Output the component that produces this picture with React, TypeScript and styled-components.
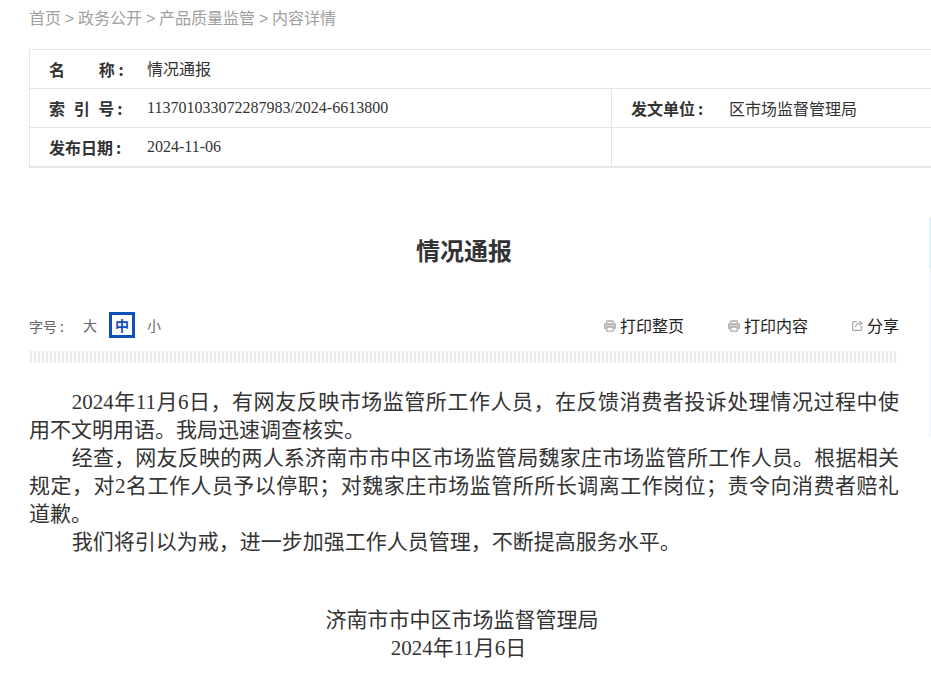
import React from "react";
import styled, { createGlobalStyle } from "styled-components";

const Global = createGlobalStyle`
  html, body { margin: 0; padding: 0; background: #fff; overflow: hidden; }
  body { font-family: "Liberation Serif", "Noto Sans CJK SC", serif; width: 931px; height: 695px; position: relative; }
`;
const CJK = `"Noto Sans CJK SC", "Liberation Sans", sans-serif`;
const Page = styled.div`
  width: 931px; height: 695px; overflow: hidden; position: relative;
  padding: 0 32px 0 29px; box-sizing: border-box;
`;
const Crumbs = styled.div`
  font: 16px/20px "Liberation Sans", "Noto Sans CJK SC", sans-serif; color: #a0a0a0; height: 49px; padding-top: 9px;
  box-sizing: border-box; word-spacing: -0.6px;
`;
const Meta = styled.div`
  width: 960px; border: 1px solid #e5e5e5; border-bottom-width: 2px; border-right: 0; box-sizing: border-box;
`;
const MetaRow = styled.div`
  display: flex; height: 38px; box-sizing: border-box;
  & + & { border-top: 1px solid #e5e5e5; height: 39px; }
`;
const MetaCell = styled.div<{ $w?: number }>`
  display: flex; align-items: center; box-sizing: border-box; padding-left: 19px;
  width: ${p => (p.$w ? `${p.$w}px` : "auto")};
  & + & { border-left: 1px solid #e5e5e5; }
`;
const Label = styled.span<{ $w: number; $gap?: number; $ls?: number }>`
  width: ${p => p.$w}px; font: bold 16px/20px ${CJK}; color: #333; white-space: pre;
  word-spacing: ${p => p.$gap ?? 0}px;
  letter-spacing: ${p => p.$ls ?? 0}px;
`;
const Colon = styled.span`
  margin-left: 3px;
`;
const Value = styled.span<{ $dy?: number }>`
  font: 16px/20px "Liberation Serif", "Noto Sans CJK SC", serif; color: #333;
  margin-top: ${p => (p.$dy ?? 0) * 2}px;
`;
const Title = styled.h1`
  margin: 0; padding-top: 64px; height: 143px; box-sizing: border-box; text-align: center;
  font: bold 24px/36px ${CJK}; color: #333; width: 870px;
`;
const Tools = styled.div`
  display: flex; align-items: center; height: 27px; width: 870px; font: 14px/20px ${CJK};
`;
const SizeLabel = styled.span`
  color: #666; font-size: 14px; width: 48px; margin-top: 2px;
`;
const SizeColon = styled.span`
  margin-left: 3px;
`;
const SizeBtn = styled.span<{ $on?: boolean }>`
  width: 26px; height: 26px; box-sizing: border-box; display: flex; align-items: center; justify-content: center;
  margin-right: 6px; font-size: 14px; font-weight: ${p => (p.$on ? 700 : 400)};
  color: ${p => (p.$on ? "#0f4fb8" : "#666")}; border: ${p => (p.$on ? "3px solid #0f4fb8" : "0")};
`;
const Spacer = styled.span`flex: 1;`;
const Action = styled.span<{ $ml?: number }>`
  display: flex; align-items: center; gap: 4px; margin-left: ${p => p.$ml ?? 0}px; font-size: 16px; color: #222;
  svg { display: block; margin-top: 2px; }
`;
const Stripes = styled.div`
  margin-top: 13px; margin-left: 1px; width: 867px; height: 12px;
  background: repeating-linear-gradient(90deg, #ebebeb 0 2px, #fcfcfc 2px 4px);
`;
const Article = styled.div`
  margin-top: 25px; width: 870px; font: 21px/28px "Liberation Serif", "Noto Sans CJK SC", serif; color: #333;
`;
const Para = styled.p`
  margin: 0; text-indent: 42.66px; text-align: justify;
`;
const Sign = styled.p<{ $trail: number }>`
  margin: 0; text-align: center; padding-right: ${p => p.$trail}px;
`;
const SignWrap = styled.div`margin-top: 50px;`;
const ScrollHint = styled.div`
  position: absolute; left: 929px; top: 218px; width: 2px; height: 220px;
  background: linear-gradient(#e3effb 0 50px, #f0f6fc 50px);
`;
const Printer = () => (
  <svg width="12" height="12" viewBox="0 0 12 12" fill="none" stroke="#b0b0b0" strokeWidth="1.3">
    <path d="M2.5 4V2.2Q2.5 1 3.7 1h4.6Q9.5 1 9.5 2.2V4" />
    <path d="M2.5 8.5H1.2Q.6 8.5 .6 7.9V4.6Q.6 4 1.2 4h9.6Q11.4 4 11.4 4.6v3.3q0 .6-.6.6H9.5" fill="#d0d0d0" />
    <path d="M2.8 7h6.4v4.2H2.8z" fill="#fff" />
  </svg>
);
const Share = () => (
  <svg width="11" height="11" viewBox="0 0 11 11" fill="none" stroke="#aaa" strokeWidth="1.2">
    <path d="M5 1.6H1.6Q.6 1.6 .6 2.6v6.8q0 1 1 1h6.8q1 0 1-1V6" />
    <path d="M3.6 7C4 4.6 5.8 3.2 8.4 3.2M7 .8l2.8 2.4L7.4 5.6" />
  </svg>
);

export default function App() {
  return (
    <Page>
      <Global />
      <Crumbs>首页 &gt; 政务公开 &gt; 产品质量监管 &gt; 内容详情</Crumbs>
      <Meta>
        <MetaRow>
          <MetaCell>
            <Label $w={98} $ls={0.6}>{"名　　称"}<Colon>:</Colon></Label>
            <Value $dy={1}>情况通报</Value>
          </MetaCell>
        </MetaRow>
        <MetaRow>
          <MetaCell $w={581}>
            <Label $w={98} $gap={5}>{"索 引 号"}<Colon>:</Colon></Label>
            <Value $dy={-0.5}>113701033072287983/2024-6613800</Value>
          </MetaCell>
          <MetaCell>
            <Label $w={98}>{"发文单位"}<Colon>:</Colon></Label>
            <Value $dy={2}>区市场监督管理局</Value>
          </MetaCell>
        </MetaRow>
        <MetaRow>
          <MetaCell $w={581}>
            <Label $w={98}>{"发布日期"}<Colon>:</Colon></Label>
            <Value>2024-11-06</Value>
          </MetaCell>
          <MetaCell />
        </MetaRow>
      </Meta>
      <Title>情况通报</Title>
      <Tools>
        <SizeLabel>字号<SizeColon>:</SizeColon></SizeLabel>
        <SizeBtn>大</SizeBtn>
        <SizeBtn $on>中</SizeBtn>
        <SizeBtn>小</SizeBtn>
        <Spacer />
        <Action><Printer />打印整页</Action>
        <Action $ml={44}><Printer />打印内容</Action>
        <Action $ml={44}><Share />分享</Action>
      </Tools>
      <Stripes />
      <Article>
        <Para>2024年11月6日，有网友反映市场监管所工作人员，在反馈消费者投诉处理情况过程中使用不文明用语。我局迅速调查核实。</Para>
        <Para>经查，网友反映的两人系济南市市中区市场监管局魏家庄市场监管所工作人员。根据相关规定，对2名工作人员予以停职；对魏家庄市场监管所所长调离工作岗位；责令向消费者赔礼道歉。</Para>
        <Para>我们将引以为戒，进一步加强工作人员管理，不断提高服务水平。</Para>
        <SignWrap>
          <Sign $trail={4}>济南市市中区市场监督管理局</Sign>
          <Sign $trail={11}>2024年11月6日</Sign>
        </SignWrap>
      </Article>
      <ScrollHint />
    </Page>
  );
}
